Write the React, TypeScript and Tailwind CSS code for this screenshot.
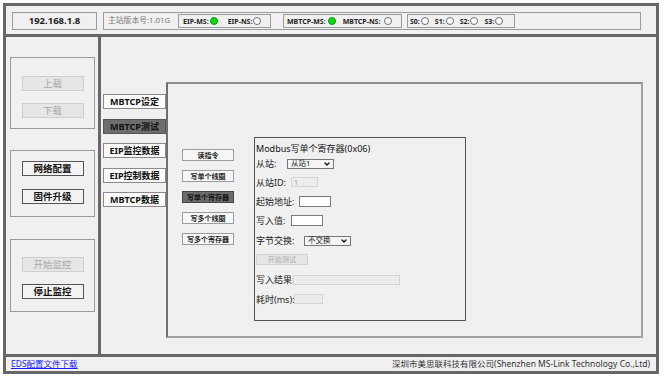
import { ChevronDown } from 'lucide-react';

const font = "font-['Noto_Sans','Noto_Sans_CJK_SC',sans-serif]";

const tabs = [
  { label: 'MBTCP设定', active: false },
  { label: 'MBTCP测试', active: true },
  { label: 'EIP监控数据', active: false },
  { label: 'EIP控制数据', active: false },
  { label: 'MBTCP数据', active: false },
];

const commands = [
  { label: '读指令', active: false },
  { label: '写单个线圈', active: false },
  { label: '写单个寄存器', active: true },
  { label: '写多个线圈', active: false },
  { label: '写多个寄存器', active: false },
];

function Dot({ on }: { on?: boolean }) {
  return (
    <span
      className={
        on
          ? 'inline-block shrink-0 w-[8px] h-[8px] rounded-full bg-[#11d911] border border-[#0a9a0a]'
          : 'inline-block shrink-0 w-[8px] h-[8px] rounded-full bg-white border border-[#6f6f6f]'
      }
    />
  );
}

function SideButton({ label, disabled }: { label: string; disabled?: boolean }) {
  return (
    <div
      className={
        disabled
          ? 'mx-auto w-[62px] h-[15px] flex items-center justify-center border border-[#cfcfcf] bg-[#e6e6e6] text-[#a8a8a8] text-[9.5px] leading-none'
          : 'mx-auto w-[62px] h-[15px] flex items-center justify-center border border-[#555] bg-[#f3f3f3] text-[#111] text-[9.5px] font-bold leading-none'
      }
    >
      {label}
    </div>
  );
}

function Select({ value, width }: { value: string; width: string }) {
  return (
    <div className={`${width} h-[10px] shrink-0 flex items-center justify-between border border-[#777] bg-[#f4f4f4] pl-[3px] pr-[2px]`}>
      <span className="text-[7.5px] leading-none text-[#222] whitespace-nowrap">{value}</span>
      <ChevronDown className="w-[8px] h-[8px] text-[#111]" strokeWidth={4} />
    </div>
  );
}

function Input({ width, disabled, value }: { width: string; disabled?: boolean; value?: string }) {
  return (
    <div
      className={
        disabled
          ? `${width} h-[10px] shrink-0 flex items-center border border-[#d4d4d4] bg-[#ececec] pl-[2px] text-[7px] text-[#999] leading-none`
          : `${width} h-[11px] shrink-0 border border-[#7a7a7a] bg-white`
      }
    >
      {value}
    </div>
  );
}

function Label({ text, width }: { text: string; width: string }) {
  return <span className={`${width} shrink-0 whitespace-nowrap`}>{text}</span>;
}

export default function App() {
  return (
    <div className={`w-[663px] h-[379px] bg-white ${font}`}>
      <div className="ml-[3px] mt-[3px] w-[656px] h-[371px] border-[3px] border-[#676767] bg-[#f0f0f0] flex flex-col">
        {/* Top bar */}
        <div className="h-[31px] shrink-0 border-b-[3px] border-[#676767] flex items-start pt-[6px] pl-[6px]">
          <div className="w-[85px] h-[18px] border border-[#9a9a9a] flex items-center justify-center text-[9.5px] font-bold text-[#222] leading-none">
            192.168.1.8
          </div>
          <div className="ml-[6px] w-[538px] h-[18px] border border-[#9a9a9a] flex items-center pl-[4px] whitespace-nowrap">
            <span className="w-[70px] shrink-0 text-[7.8px] text-[#7a7a7a] leading-none">主站版本号:1.01G</span>
            <div className="w-[93px] h-[14px] shrink-0 border border-[#9a9a9a] flex items-center pl-[4px] text-[7px] font-bold text-[#222] leading-none">
              <span>EIP-MS:</span>
              <span className="ml-[1px] flex"><Dot on /></span>
              <span className="ml-[10px]">EIP-NS:</span>
              <span className="ml-[1px] flex"><Dot /></span>
            </div>
            <div className="ml-[12px] w-[119px] h-[14px] shrink-0 border border-[#9a9a9a] flex items-center pl-[3px] text-[7px] font-bold text-[#222] leading-none">
              <span>MBTCP-MS:</span>
              <span className="ml-[2px] flex"><Dot on /></span>
              <span className="ml-[7px]">MBTCP-NS:</span>
              <span className="ml-[4px] flex"><Dot /></span>
            </div>
            <div className="ml-[5px] w-[108px] h-[14px] shrink-0 border border-[#9a9a9a] flex items-center pl-[2px] text-[7px] font-bold text-[#222] leading-none gap-[1px]">
              <span>S0:</span>
              <Dot />
              <span className="ml-[5px]">S1:</span>
              <Dot />
              <span className="ml-[5px]">S2:</span>
              <Dot />
              <span className="ml-[5px]">S3:</span>
              <Dot />
            </div>
          </div>
        </div>

        {/* Main row */}
        <div className="h-[320px] shrink-0 border-b-[3px] border-[#676767] flex">
          {/* Left column */}
          <div className="w-[95px] shrink-0 border-r-[3px] border-[#676767] pl-[4px] pt-[20px] flex flex-col">
            <div className="w-[85px] h-[72px] border border-[#9a9a9a] pt-[18px] flex flex-col gap-[12px]">
              <SideButton label="上载" disabled />
              <SideButton label="下载" disabled />
            </div>
            <div className="mt-[21px] w-[85px] h-[67px] border border-[#9a9a9a] pt-[10px] flex flex-col gap-[13px]">
              <SideButton label="网络配置" />
              <SideButton label="固件升级" />
            </div>
            <div className="mt-[22px] w-[85px] h-[73px] border border-[#9a9a9a] pt-[17px] flex flex-col gap-[12px]">
              <SideButton label="开始监控" disabled />
              <SideButton label="停止监控" />
            </div>
          </div>

          {/* Middle */}
          <div className="flex-1 flex items-start pl-[2px]">
            <div className="w-[63px] shrink-0 mt-[57px] flex flex-col gap-[9.5px]">
              {tabs.map((t) => (
                <div
                  key={t.label}
                  className={
                    t.active
                      ? 'h-[15px] flex items-center justify-center border border-[#555] bg-[#6d6d6d] text-[9px] font-bold text-[#111] leading-none whitespace-nowrap'
                      : 'h-[15px] flex items-center justify-center border border-[#8a8a8a] bg-[#fbfbfb] text-[9px] font-bold text-[#111] leading-none whitespace-nowrap'
                  }
                >
                  {t.label}
                </div>
              ))}
            </div>

            <div className="mt-[45px] w-[477px] h-[256px] shrink-0 border-2 border-[#a3a3a3] border-t-[#8c8c8c] border-l-[#6f6f6f] flex items-start pl-[14px]">
              <div className="mt-[65px] w-[52px] shrink-0 flex flex-col gap-[9px]">
                {commands.map((c) => (
                  <div
                    key={c.label}
                    className={
                      c.active
                        ? 'h-[12px] flex items-center justify-center border border-[#444] bg-[#6b6b6b] text-[7px] font-bold text-[#111] leading-none whitespace-nowrap'
                        : 'h-[12px] flex items-center justify-center border-[1.5px] border-[#9c9c9c] bg-[#f7f7f7] text-[7px] font-bold text-[#222] leading-none whitespace-nowrap'
                    }
                  >
                    {c.label}
                  </div>
                ))}
              </div>

              {/* Form */}
              <div className="ml-[20px] mt-[53px] w-[212px] h-[184px] shrink-0 border border-[#555] pl-[1px] pt-[3px] flex flex-col text-[9px] text-[#222] leading-none">
                <div className="h-[14px] flex items-center text-[#111] whitespace-nowrap">Modbus写单个寄存器(0x06)</div>
                <div className="h-[17px] flex items-center">
                  <Label text="从站:" width="w-[31px]" />
                  <Select value="从站1" width="w-[47px]" />
                </div>
                <div className="h-[20px] flex items-center">
                  <Label text="从站ID:" width="w-[35px]" />
                  <Input width="w-[27px]" disabled value="1" />
                </div>
                <div className="h-[19px] flex items-center">
                  <Label text="起始地址:" width="w-[43px]" />
                  <Input width="w-[32px]" />
                </div>
                <div className="h-[19px] flex items-center">
                  <Label text="写入值:" width="w-[35px]" />
                  <Input width="w-[32px]" />
                </div>
                <div className="h-[21px] flex items-center">
                  <Label text="字节交换:" width="w-[48px]" />
                  <Select value="不交换" width="w-[47px]" />
                </div>
                <div className="h-[17px] flex items-center">
                  <div className="w-[52px] h-[11px] flex items-center justify-center border border-[#d2d2d2] bg-[#e6e6e6] text-[7px] text-[#aaa] whitespace-nowrap">
                    开始测试
                  </div>
                </div>
                <div className="h-[23px] flex items-center">
                  <Label text="写入结果:" width="w-[37px]" />
                  <Input width="w-[107px]" disabled />
                </div>
                <div className="h-[16px] flex items-center">
                  <Label text="耗时(ms):" width="w-[38px]" />
                  <Input width="w-[29px]" disabled />
                </div>
              </div>
            </div>
          </div>
        </div>

        {/* Footer */}
        <div className="h-[14px] shrink-0 flex items-center justify-between pl-[5px] pr-[6px] text-[8.5px] leading-none whitespace-nowrap">
          <span className="text-[#1a1aff] underline">EDS配置文件下载</span>
          <span className="text-[#333]">深圳市美思联科技有限公司(Shenzhen MS-Link Technology Co.,Ltd)</span>
        </div>
      </div>
    </div>
  );
}
